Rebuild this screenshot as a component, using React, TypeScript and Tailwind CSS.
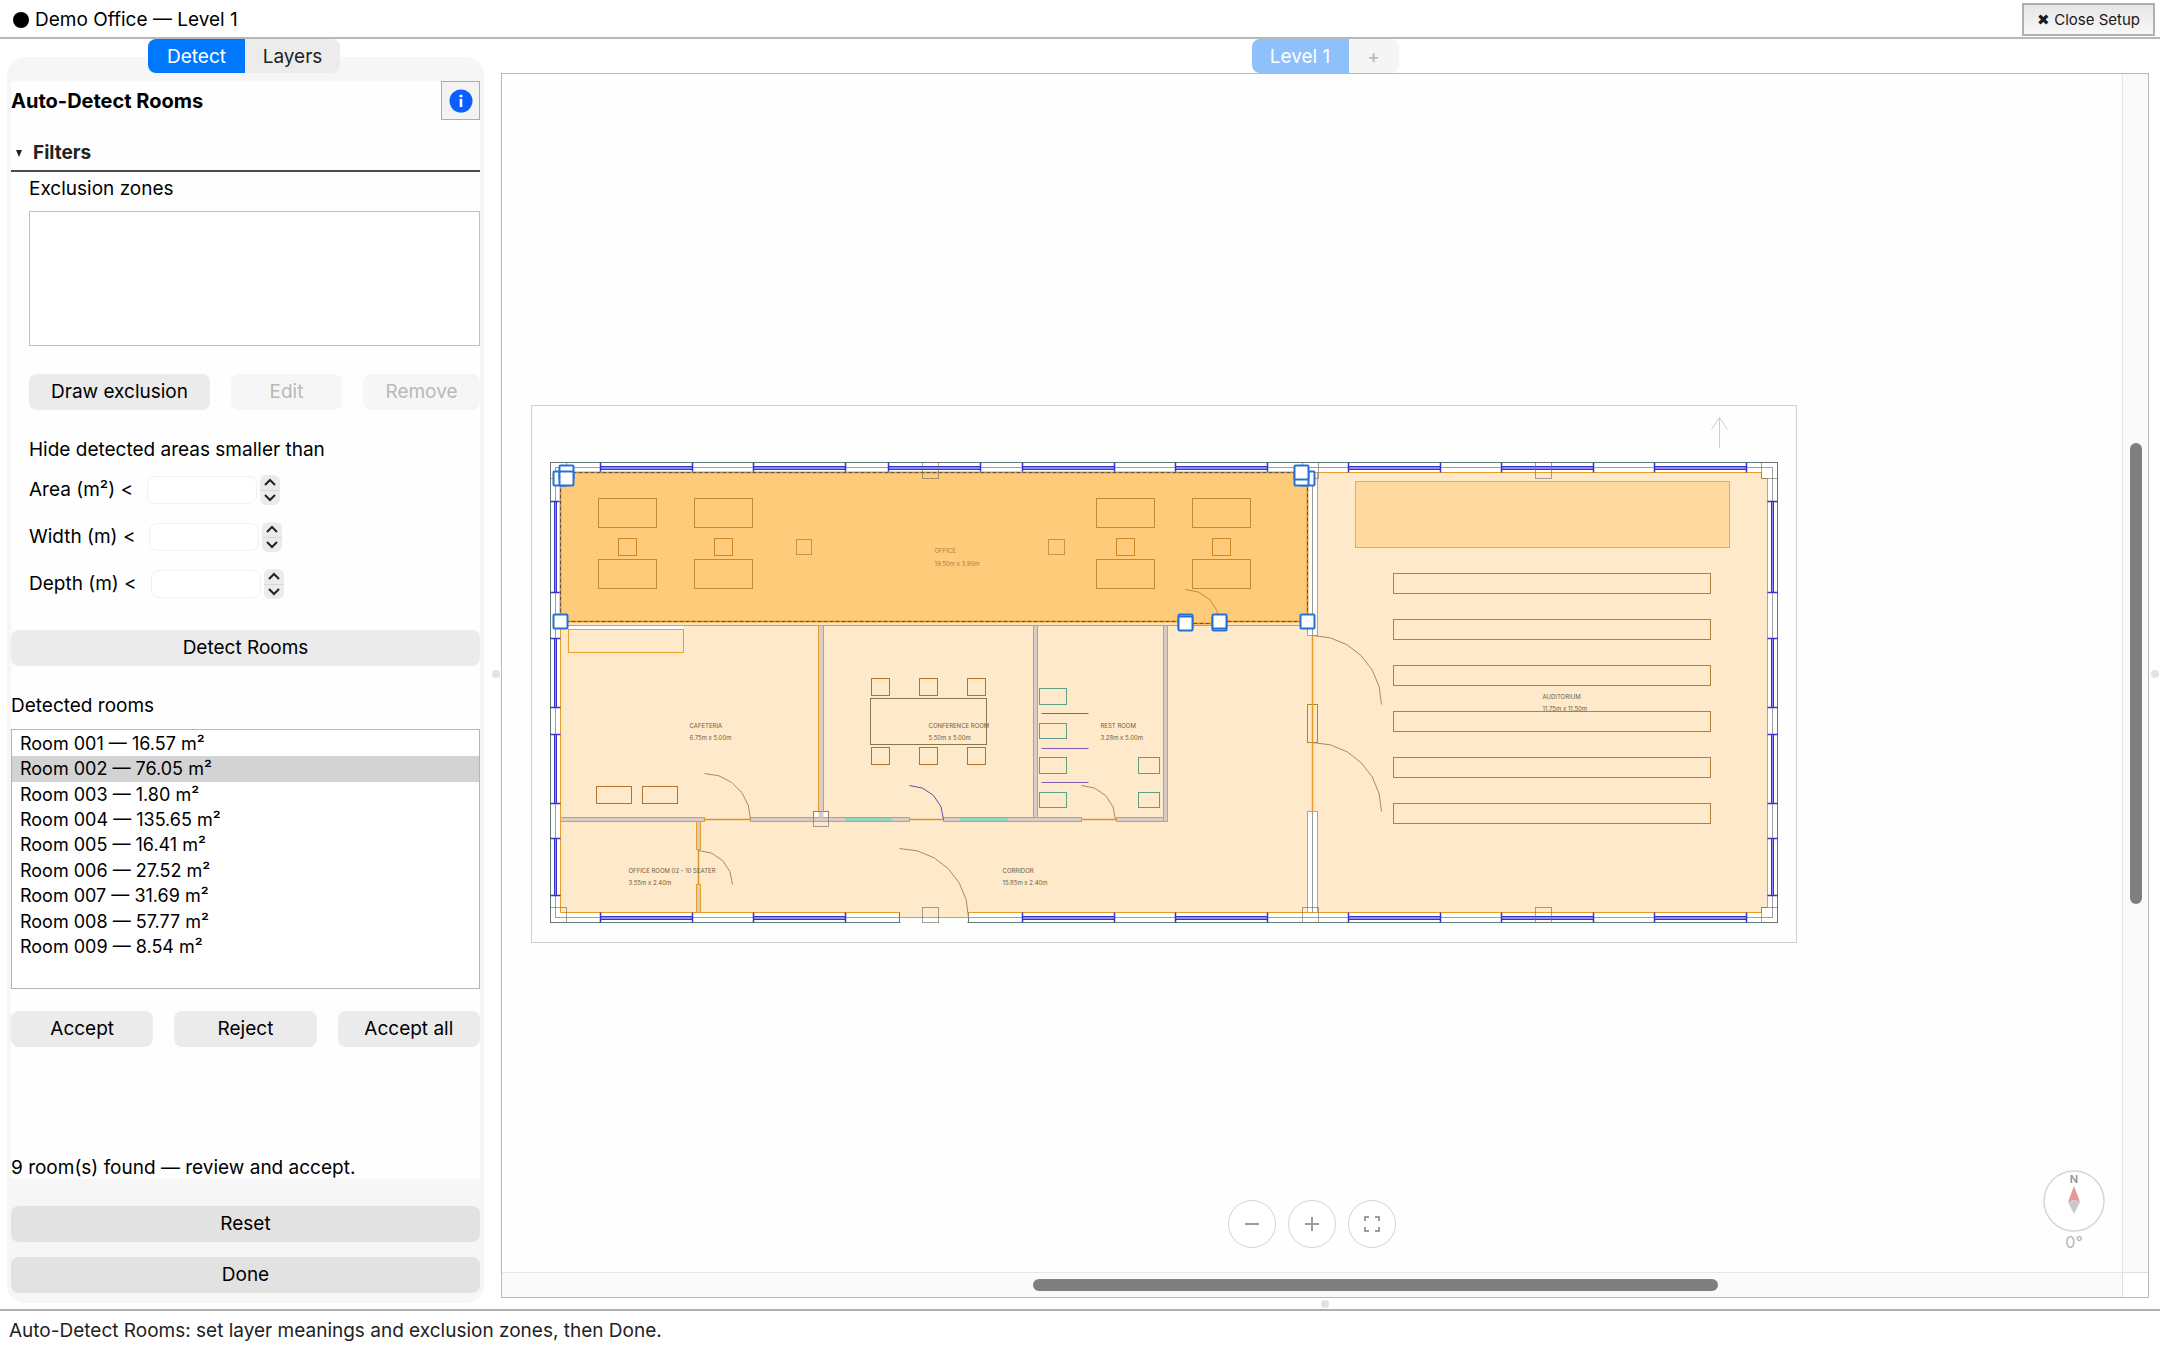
import { useState, type ReactNode } from 'react';

type Box = [x: number, y: number, w: number, h: number];

const ROOMS = [
    { id: '001', area: '16.57' },
    { id: '002', area: '76.05' },
    { id: '003', area: '1.80' },
    { id: '004', area: '135.65' },
    { id: '005', area: '16.41' },
    { id: '006', area: '27.52' },
    { id: '007', area: '31.69' },
    { id: '008', area: '57.77' },
    { id: '009', area: '8.54' },
];

const FILTERS = [
    { id: 'min-area', label: 'Area (m²) <' },
    { id: 'min-width', label: 'Width (m) <' },
    { id: 'min-depth', label: 'Depth (m) <' },
];

export default function App() {
    const [selected, setSelected] = useState('002');

    return (
        <div className="flex h-screen flex-col bg-white font-['Inter',sans-serif] text-[19px] leading-6 text-black">
            <header className="flex h-[39px] shrink-0 items-center justify-between border-b-2 border-[#b8b8b8] pt-0.5 pr-[5px] pl-[13px]">
                <div className="flex items-center gap-1.5">
                    <span className="size-4 rounded-full bg-black" />
                    <h1>Demo Office — Level 1</h1>
                </div>
                <button
                    type="button"
                    className="h-[33px] border-2 border-[#b0b0b0] bg-linear-to-b from-[#e6e6e6] to-[#f8f8f8] px-[13px] text-[15px] leading-5 text-[#1a1a1a]"
                >
                    ✖ Close Setup
                </button>
            </header>

            <div className="flex min-h-0 flex-1">
                <aside className="flex w-[484px] shrink-0 flex-col pb-1.5 pl-[7px]">
                    <div className="relative flex h-[34px] shrink-0 justify-center pr-[3px]" role="tablist">
                        <button type="button" role="tab" aria-selected="true" className="w-[97px] rounded-l-lg bg-[#0078fd] pt-0.5 text-white">
                            Detect
                        </button>
                        <button type="button" role="tab" aria-selected="false" className="w-[95px] rounded-r-lg bg-[#ececec] pt-0.5 text-[#222222]">
                            Layers
                        </button>
                    </div>
                    <div className="-mt-4 flex flex-1 flex-col rounded-[18px] bg-[#f6f6f6] px-1 pt-6 pb-2.5">
                        <div className="flex flex-1 flex-col bg-[#fefefe]">
                            <div className="flex h-[39px] items-center justify-between">
                                <h2 className="text-xl font-bold">Auto-Detect Rooms</h2>
                                <button
                                    type="button"
                                    aria-label="About room detection"
                                    className="flex size-[39px] items-center justify-center border border-[#ababab] bg-[#f3f3f3]"
                                >
                                    <svg viewBox="0 0 24 24" className="size-6">
                                        <circle cx="12" cy="12" r="11.5" fill="#0a60ff" />
                                        <circle cx="12" cy="7" r="1.6" fill="#fff" />
                                        <path d="M12 10v8" stroke="#fff" strokeWidth="2.6" />
                                    </svg>
                                </button>
                            </div>

                            <button
                                type="button"
                                aria-expanded="true"
                                className="mt-4 flex h-9 items-center gap-2.5 border-b-2 border-[#4c4c4e] pl-1 font-bold text-[#222222]"
                            >
                                <svg viewBox="0 0 8 8" className="size-2">
                                    <path d="M1 1h6L4 8z" fill="#222" />
                                </svg>
                                Filters
                            </button>

                            <section className="mt-[5px] flex flex-col pl-[18px]">
                                <p>Exclusion zones</p>
                                <div className="mt-2.5 h-[135px] border border-[#c2c2c2] bg-white" />
                                <div className="mt-7 flex gap-[21px]">
                                    <PushButton className="w-[181px]">Draw exclusion</PushButton>
                                    <PushButton className="w-[111px]" disabled>Edit</PushButton>
                                    <PushButton className="flex-1" disabled>Remove</PushButton>
                                </div>
                                <p className="mt-7">Hide detected areas smaller than</p>
                                <div className="mt-[13px] flex flex-col gap-[17px]">
                                    {FILTERS.map((f) => (
                                        <NumberRow key={f.id} id={f.id} label={f.label} />
                                    ))}
                                </div>
                            </section>

                            <PushButton className="mt-[31px]">Detect Rooms</PushButton>

                            <p className="mt-7">Detected rooms</p>
                            <ul className="mt-[11px] grid h-[260px] grid-rows-9 border border-[#b4b4b4] bg-white pt-px pb-7 text-lg leading-5">
                                {ROOMS.map((room) => (
                                    <li key={room.id} className="flex">
                                        <button
                                            type="button"
                                            onClick={() => setSelected(room.id)}
                                            className={`flex-1 pl-2 text-left ${room.id === selected ? 'bg-[#d3d3d3]' : ''}`}
                                        >
                                            Room {room.id} — {room.area} m²
                                        </button>
                                    </li>
                                ))}
                            </ul>

                            <div className="mt-[22px] grid grid-cols-3 gap-[21px]">
                                <PushButton>Accept</PushButton>
                                <PushButton>Reject</PushButton>
                                <PushButton>Accept all</PushButton>
                            </div>
                            <p className="mt-auto leading-[22px]">9 room(s) found — review and accept.</p>
                        </div>
                        <button type="button" className="mt-[27px] h-9 rounded-lg bg-[#e2e2e2]">Reset</button>
                        <button type="button" className="mt-[15px] h-9 rounded-lg bg-[#e2e2e2]">Done</button>
                    </div>
                </aside>

                <SplitDot className="w-[17px] pl-2" />

                <main className="flex min-w-0 flex-1 flex-col">
                    <div className="flex h-[34px] shrink-0 justify-center" role="tablist">
                        <button type="button" role="tab" aria-selected="true" className="w-[97px] rounded-l-lg bg-[#8ec0fb] pt-0.5 text-white">
                            Level 1
                        </button>
                        <button type="button" aria-label="Add level" className="w-[50px] rounded-r-lg bg-[#f5f5f5] pt-0.5 text-[#b4b4b4]">
                            +
                        </button>
                    </div>
                    <div className="grid min-h-0 flex-1 grid-cols-[1fr_26px] grid-rows-[1fr_25px] border border-[#b8b8b8] bg-[#fefefe]">
                        <div className="relative min-h-0 overflow-hidden">
                            <FloorPlan />
                            <div className="absolute bottom-6 left-1/2 flex -translate-x-1/2 gap-3">
                                <RoundButton label="Zoom out"><path d="M5 12h14" /></RoundButton>
                                <RoundButton label="Zoom in"><path d="M5 12h14M12 5v14" /></RoundButton>
                                <RoundButton label="Fit to view"><path d="M5 9V5h4M15 5h4v4M19 15v4h-4M9 19H5v-4" /></RoundButton>
                            </div>
                            <Compass />
                        </div>
                        <div className="flex flex-col items-center border-l border-[#e6e6e6] bg-[#fafafa] pt-[369px]">
                            <div className="h-[461px] w-3 rounded-full bg-[#7f7f7f]" />
                        </div>
                        <div className="flex items-center border-t border-[#e6e6e6] bg-[#fafafa] pl-[531px]">
                            <div className="h-3 w-[685px] rounded-full bg-[#7f7f7f]" />
                        </div>
                        <div className="border-t border-l border-[#e0e0e0] bg-white" />
                    </div>
                    <div className="flex h-[11px] items-center justify-center">
                        <span className="size-2 rounded-full bg-[#e2e2e2]" />
                    </div>
                </main>

                <SplitDot className="w-[11px] pl-0.5" />
            </div>

            <footer className="flex h-[41px] shrink-0 items-center border-t-2 border-[#b0b0b0] pt-px pl-[9px] text-[#222222]">
                Auto-Detect Rooms: set layer meanings and exclusion zones, then Done.
            </footer>
        </div>
    );
}

function PushButton({
    children,
    className = '',
    disabled = false,
}: {
    children: ReactNode;
    className?: string;
    disabled?: boolean;
}) {
    return (
        <button
            type="button"
            disabled={disabled}
            className={`h-9 rounded-lg ${disabled ? 'bg-[#f6f6f6] text-[#b9b9b9]' : 'bg-[#ebebeb]'} ${className}`}
        >
            {children}
        </button>
    );
}

function NumberRow({ id, label }: { id: string; label: string }) {
    return (
        <div className="flex h-[30px] items-center">
            <label htmlFor={id}>{label}</label>
            <input
                id={id}
                type="text"
                inputMode="decimal"
                className="ml-3.5 h-7 w-[110px] rounded-lg border border-[#f1f1f1] bg-white px-2"
            />
            <div className="ml-[3px] flex h-[30px] w-5 flex-col rounded-md bg-[#ebebeb] text-[#222222]">
                <button type="button" aria-label={`Increase ${label}`} className="flex flex-1 items-center justify-center border-b border-[#d9d9d9]">
                    <svg viewBox="0 0 12 8" className="h-2 w-3" fill="none" stroke="currentColor" strokeWidth="2">
                        <path d="M1 7l5-5 5 5" />
                    </svg>
                </button>
                <button type="button" aria-label={`Decrease ${label}`} className="flex flex-1 items-center justify-center">
                    <svg viewBox="0 0 12 8" className="h-2 w-3" fill="none" stroke="currentColor" strokeWidth="2">
                        <path d="M1 1l5 5 5-5" />
                    </svg>
                </button>
            </div>
        </div>
    );
}

function SplitDot({ className }: { className: string }) {
    return (
        <div className={`flex shrink-0 items-center ${className}`}>
            <span className="size-2 rounded-full bg-[#e2e2e2]" />
        </div>
    );
}

function RoundButton({ label, children }: { label: string; children: ReactNode }) {
    return (
        <button
            type="button"
            aria-label={label}
            className="flex size-12 items-center justify-center rounded-full border border-[#d4d4d4] bg-white text-[#9c9c9c]"
        >
            <svg viewBox="0 0 24 24" className="size-6" fill="none" stroke="currentColor" strokeWidth="2">
                {children}
            </svg>
        </button>
    );
}

function Compass() {
    return (
        <div className="absolute right-[17px] bottom-5 flex flex-col items-center text-[#b4b4b4]">
            <svg viewBox="0 0 62 62" className="size-[62px]">
                <circle cx="31" cy="31" r="30" fill="#fff" stroke="#d6d6d6" strokeWidth="1.5" />
                <text x="31" y="13" textAnchor="middle" fontSize="11" fontWeight="600" fill="#929292">N</text>
                <path d="M31 16l6 16-6-2-6 2z" fill="#e59a9a" />
                <path d="M25 32l6-2 6 2-6 12z" fill="#c8c8c8" />
            </svg>
            <span className="text-base leading-5">0°</span>
        </div>
    );
}

const TOP_WINDOWS = [600, 753, 888, 1022, 1175, 1348, 1501, 1654];
const BOTTOM_WINDOWS = [600, 753, 1022, 1175, 1348, 1501, 1654];
const SIDE_WINDOWS = [[501, 592], [638, 707], [734, 803], [838, 895]];

const COLUMNS: Box[] = [
    [550, 462, 16, 16], [922, 462, 16, 16], [1302, 462, 16, 16], [1535, 462, 16, 16], [1761, 462, 16, 16],
    [550, 907, 16, 15], [922, 907, 16, 15], [1302, 907, 16, 15], [1535, 907, 16, 15], [1761, 907, 16, 15],
    [813, 811, 15, 15],
];

// inner partitions, horizontal then vertical
const PARTITIONS: Box[] = [
    [560, 817, 144, 4], [750, 817, 159, 4], [943, 817, 138, 4], [1116, 817, 51, 4],
    [818, 625, 5, 192], [1033, 625, 4, 192], [1163, 625, 4, 196],
    [696, 821, 4, 28], [696, 884, 4, 28],
];

const DESKS: Box[] = [598, 694, 1096, 1192].flatMap((x): Box[] => [[x, 498, 58, 29], [x, 559, 58, 29]]);
const OFFICE_CHAIRS: Box[] = [618, 714, 1116, 1212].map((x): Box => [x, 538, 18, 17]);
const OFFICE_POSTS: Box[] = [[796, 539, 15, 15], [1048, 539, 16, 15]];
const MEETING_CHAIRS: Box[] = [871, 919, 967].flatMap((x): Box[] => [[x, 678, 18, 17], [x, 747, 18, 17]]);
const CAFE_TABLES: Box[] = [[596, 786, 35, 17], [642, 786, 35, 17]];
const BENCHES: Box[] = [573, 619, 665, 711, 757, 803].map((y): Box => [1393, y, 317, 20]);
const FIXTURES: Box[] = [
    [1039, 688, 27, 16], [1039, 723, 27, 15], [1039, 757, 27, 16], [1039, 792, 27, 15],
    [1138, 757, 21, 16], [1138, 792, 21, 15],
];

const LABELS = [
    { x: 689, y: 727, name: 'CAFETERIA', size: '6.75m x 5.00m' },
    { x: 928, y: 727, name: 'CONFERENCE ROOM', size: '5.50m x 5.00m' },
    { x: 1100, y: 727, name: 'REST ROOM', size: '3.28m x 5.00m' },
    { x: 628, y: 872, name: 'OFFICE ROOM 02 - 10 SEATER', size: '3.55m x 2.40m' },
    { x: 1002, y: 872, name: 'CORRIDOR', size: '15.85m x 2.40m' },
    { x: 1542, y: 698, name: 'AUDITORIUM', size: '11.75m x 11.50m' },
];

// last one in each stack is drawn on top
const HANDLES = [
    [560, 478], [566, 472], [566, 478],
    [1307, 478], [1301, 478], [1301, 472],
    [560, 621], [1307, 621],
    [1185, 621], [1185, 623], [1219, 623], [1219, 621],
];

// quarter circle swing, flattened into straight steps
function swing(cx: number, cy: number, r: number, steps: number): string {
    return Array.from({ length: steps + 1 }, (_, i) => {
        const a = (i / steps) * (Math.PI / 2);
        return `${cx + r * Math.sin(a)},${cy - r * Math.cos(a)}`;
    }).join(' ');
}

function Boxes({ items, stroke, fill = 'none' }: { items: Box[]; stroke: string; fill?: string }) {
    return (
        <g stroke={stroke} fill={fill}>
            {items.map(([x, y, w, h]) => (
                <rect key={`${x}-${y}`} x={x} y={y} width={w} height={h} />
            ))}
        </g>
    );
}

function WindowH({ x, y }: { x: number; y: number }) {
    return (
        <g stroke="#3434c8">
            <rect x={x} y={y + 4} width="92" height="3" fill="#8c8cf0" />
            <path d={`M${x} ${y}v10M${x + 92} ${y}v10`} strokeWidth="1.5" />
        </g>
    );
}

function WindowV({ x, y1, y2 }: { x: number; y1: number; y2: number }) {
    return (
        <g stroke="#3434c8">
            <rect x={x + 4} y={y1} width="2" height={y2 - y1} fill="#8c8cf0" />
            <path d={`M${x} ${y1}h10M${x} ${y2}h10`} strokeWidth="1.5" />
        </g>
    );
}

function FloorPlan() {
    return (
        <svg className="absolute inset-0 size-full" role="img" aria-label="Floor plan of Level 1">
            <g transform="translate(-501.5 -73.5)" fill="none" strokeWidth="1">
                <rect x="531" y="405" width="1265" height="537" stroke="#d0d0d0" />
                <path d="M1719 448v-31M1711 429l8-12 8 12" stroke="#cfcfcf" />

                {/* outer walls */}
                <rect x="550" y="462" width="1227" height="460" stroke="#5f7d77" fill="#fff" />
                <rect x="555" y="467" width="1217" height="450" stroke="#a0a0a0" />

                {/* room fills */}
                <path
                    d="M560 625H1307V635H1312V811H1307V912H968V917H899V912H560Z"
                    fill="#feeacb"
                    stroke="#e59d2c"
                />
                <path
                    d="M1317 472H1761V478H1767V907H1761V912H1317V811H1312V635H1317Z"
                    fill="#feeacb"
                    stroke="#e59d2c"
                />
                <rect x="560" y="621" width="747" height="4" fill="#fbe3c0" stroke="#d39b4c" />

                {/* divider between office wing and auditorium */}
                <rect x="1307" y="472" width="10" height="163" fill="#fff" stroke="#e59d2c" />
                <rect x="1307" y="811" width="10" height="101" fill="#fff" stroke="#e59d2c" />
                <path d="M1312 472V635M1312 811V912" stroke="#9a9a9a" />
                <rect x="1307" y="704" width="10" height="38" stroke="#b9812c" />
                <path d="M1312 635V811" stroke="#e99a20" strokeWidth="1.5" />

                {/* windows */}
                {TOP_WINDOWS.map((x) => <WindowH key={x} x={x} y={462} />)}
                {BOTTOM_WINDOWS.map((x) => <WindowH key={x} x={x} y={912} />)}
                {SIDE_WINDOWS.map(([y1, y2]) => (
                    <g key={y1}>
                        <WindowV x={550} y1={y1} y2={y2} />
                        <WindowV x={1767} y1={y1} y2={y2} />
                    </g>
                ))}

                {/* main entrance */}
                <rect x="900" y="918" width="67" height="6" fill="#fefefe" />
                <path d="M899 912v10M968 912v10" stroke="#5f7d77" />

                {/* partitions */}
                <path d="M704 819H750M909 819H943M1081 819H1116M698 849V884" stroke="#d9952c" strokeWidth="1.5" />
                <Boxes items={PARTITIONS} stroke="#e59d2c" fill="#d9ccc6" />
                <path d="M845 819H892M960 819H1007" stroke="#8fd6bd" strokeWidth="3" />
                <rect x="813" y="811" width="15" height="6" fill="#fff" stroke="#e59d2c" />
                <rect x="818" y="811" width="5" height="6" fill="#d9ccc6" />

                {/* selected room */}
                <path
                    d="M560 472H1307V621H1219V623H1185V621H560Z"
                    fill="#fecb7a"
                    stroke="#eba030"
                    strokeWidth="2"
                />
                <path d="M560 472H1307V621H1219V623H1185V621H560Z" stroke="#555" strokeDasharray="4 2" />

                <Boxes items={COLUMNS} stroke="#77706aaa" />

                {/* furniture */}
                <Boxes items={DESKS} stroke="#c28a36" />
                <Boxes items={OFFICE_CHAIRS} stroke="#cc8624" />
                <Boxes items={OFFICE_POSTS} stroke="#c5934a" />
                <path d="M568 627H683" stroke="#fff" strokeWidth="3" />
                <rect x="568" y="629" width="115" height="23" stroke="#e9a02e" />
                <rect x="870" y="698" width="116" height="46" stroke="#827b4c" />
                <Boxes items={MEETING_CHAIRS} stroke="#b0742e" />
                <Boxes items={CAFE_TABLES} stroke="#b0742e" />
                <Boxes items={FIXTURES} stroke="#5f9f86" />
                <path d="M1041 713H1088M1041 748H1088M1041 782H1088" stroke="#7a5cb0" />
                <rect x="1355" y="481" width="374" height="66" fill="#feda9f" stroke="#ecab45" />
                <Boxes items={BENCHES} stroke="#b37f3d" />

                {/* door swings */}
                <g stroke="#a38a62">
                    <polyline points={swing(704, 819, 46, 5)} />
                    <polyline points={swing(1081, 819, 34, 4)} />
                    <polyline points={swing(698, 884, 34, 4)} />
                    <polyline points={swing(899, 917, 69, 6)} />
                    <polyline points={swing(1312, 704, 69, 6)} />
                    <polyline points={swing(1312, 811, 69, 6)} />
                    <polyline points={swing(1185, 623, 34, 4)} stroke="#c28a36" />
                    <polyline points={swing(909, 819, 34, 4)} stroke="#6a4eae" />
                </g>

                <g fill="#6e5c3c" fontSize="6">
                    {LABELS.map((l) => (
                        <g key={l.name}>
                            <text x={l.x} y={l.y}>{l.name}</text>
                            <text x={l.x} y={l.y + 12}>{l.size}</text>
                        </g>
                    ))}
                    <g fill="#b08040">
                        <text x="934" y="552">OFFICE</text>
                        <text x="934" y="565">19.50m x 3.90m</text>
                    </g>
                </g>

                <g fill="#fff" stroke="#2470d8" strokeWidth="2">
                    {HANDLES.map(([x, y]) => (
                        <rect key={`${x}-${y}`} x={x - 7} y={y - 7} width="14" height="14" rx="1" />
                    ))}
                </g>
            </g>
        </svg>
    );
}
